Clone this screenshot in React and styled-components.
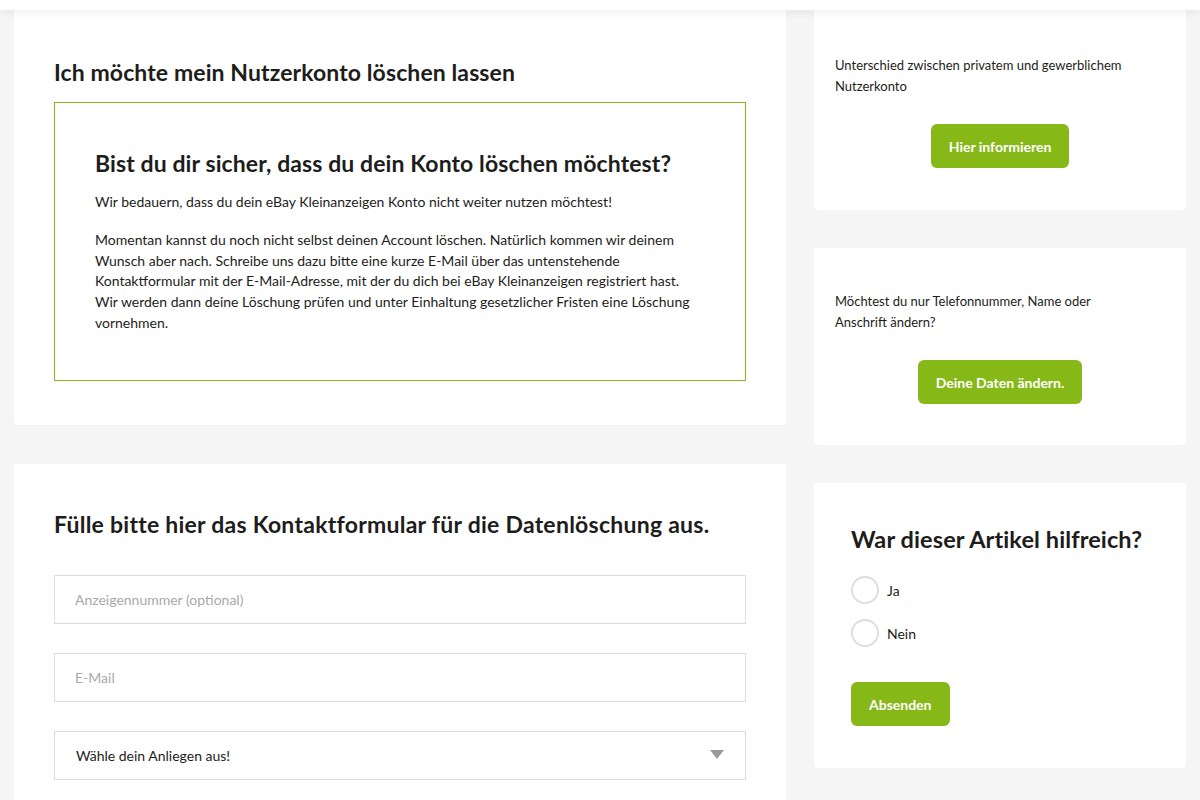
import React from "react";
import styled, { createGlobalStyle } from "styled-components";

const Global = createGlobalStyle`
  html, body { margin: 0; padding: 0; }
  body {
    background: #f5f5f5;
    font-family: Lato, "Open Sans", "Liberation Sans", sans-serif;
    color: #1d1d1b;
    overflow: hidden;
  }
`;

const Header = styled.div`
  position: relative;
  z-index: 2;
  height: 10px;
  background: #fff;
  box-shadow: 0 2px 10px rgba(0, 0, 0, 0.07);
`;

const Layout = styled.div`
  display: grid;
  grid-template-columns: 772px 372px;
  column-gap: 28px;
  padding: 0 14px;
  align-items: start;
`;

const Column = styled.div`
  display: flex;
  flex-direction: column;
  gap: ${(p) => p.$gap || 38}px;
`;

const Card = styled.section`
  background: #fff;
  border-radius: 0 0 4px 4px;
  padding: ${(p) => p.$pad};
  box-sizing: border-box;
  min-height: ${(p) => p.$h || 0}px;
`;

const H2 = styled.h2`
  margin: 0;
  font-size: ${(p) => p.$size || 23}px;
  line-height: 28px;
  font-weight: 700;
  letter-spacing: ${(p) => p.$ls || 0.1}px;
  color: #1d1d1b;
`;

const Notice = styled.div`
  margin-top: 16px;
  border: 1px solid #86b817;
  padding: 46px 40px 46px;
`;

const P = styled.p`
  margin: ${(p) => p.$mt || 0}px 0 0;
  font-size: 14px;
  line-height: 20.75px;
  color: #1d1d1b;
`;

const FormFields = styled.div`
  margin-top: 37px;
  display: flex;
  flex-direction: column;
  gap: 29px;
`;

const Input = styled.input`
  box-sizing: border-box;
  height: 49px;
  width: 100%;
  border: 1px solid #dcdcdc;
  padding: 0 20px;
  font-family: inherit;
  font-size: 14px;
  color: #1d1d1b;
  outline: none;
  &::placeholder { color: #a9a9a9; }
`;

const SelectBox = styled.div`
  box-sizing: border-box;
  height: 49px;
  border: 1px solid #dcdcdc;
  padding: 0 21px;
  display: flex;
  align-items: center;
  justify-content: space-between;
  font-size: 14px;
  color: #1d1d1b;
`;

const Arrow = styled.span`
  width: 0;
  height: 0;
  border-left: 7px solid transparent;
  border-right: 7px solid transparent;
  border-top: 9px solid #9a9a9a;
  margin-top: -2px;
`;

const SideText = styled.p`
  margin: 0;
  max-width: 295px;
  font-size: 13px;
  line-height: 21px;
  color: #1d1d1b;
`;

const Center = styled.div`
  display: flex;
  justify-content: ${(p) => (p.$left ? "flex-start" : "center")};
  margin-top: ${(p) => p.$mt || 0}px;
`;

const Button = styled.button`
  height: 44px;
  padding: 0 18px;
  border: none;
  border-radius: 6px;
  background: #86b817;
  color: #fff;
  font-family: inherit;
  font-weight: 700;
  font-size: 14px;
  cursor: pointer;
`;

const RadioList = styled.div`
  margin-top: 23px;
  display: flex;
  flex-direction: column;
  gap: 15px;
`;

const RadioRow = styled.label`
  display: flex;
  align-items: center;
  gap: 8px;
  font-size: 14px;
  color: #1d1d1b;
`;

const Circle = styled.span`
  width: 24px;
  height: 24px;
  border-radius: 50%;
  border: 2px solid #dedede;
  background: #fff;
`;

export default function App() {
  return (
    <>
      <Global />
      <Header />
      <Layout>
        <Column $gap={39}>
          <Card $pad="48px 40px 44px">
            <H2>Ich möchte mein Nutzerkonto löschen lassen</H2>
            <Notice>
              <H2>Bist du dir sicher, dass du dein Konto löschen möchtest?</H2>
              <P $mt={15}>
                Wir bedauern, dass du dein eBay Kleinanzeigen Konto nicht weiter nutzen möchtest!
              </P>
              <P $mt={17}>
                Momentan kannst du noch nicht selbst deinen Account löschen. Natürlich kommen wir deinem
                <br />
                Wunsch aber nach. Schreibe uns dazu bitte eine kurze E-Mail über das untenstehende
                <br />
                Kontaktformular mit der E-Mail-Adresse, mit der du dich bei eBay Kleinanzeigen registriert hast.
                <br />
                Wir werden dann deine Löschung prüfen und unter Einhaltung gesetzlicher Fristen eine Löschung
                <br />
                vornehmen.
              </P>
            </Notice>
          </Card>
          <Card $pad="46px 40px 40px" $h={400}>
            <H2 $ls={0.25}>Fülle bitte hier das Kontaktformular für die Datenlöschung aus.</H2>
            <FormFields>
              <Input placeholder="Anzeigennummer (optional)" />
              <Input placeholder="E-Mail" />
              <SelectBox>
                <span>Wähle dein Anliegen aus!</span>
                <Arrow />
              </SelectBox>
            </FormFields>
          </Card>
        </Column>
        <Column>
          <Card $pad="45px 21px 42px">
            <SideText>Unterschied zwischen privatem und gewerblichem Nutzerkonto</SideText>
            <Center $mt={27}>
              <Button>Hier informieren</Button>
            </Center>
          </Card>
          <Card $pad="43px 21px 41px">
            <SideText>Möchtest du nur Telefonnummer, Name oder Anschrift ändern?</SideText>
            <Center $mt={27}>
              <Button>Deine Daten ändern.</Button>
            </Center>
          </Card>
          <Card $pad="42px 37px 42px">
            <H2 $size={23.5} $ls={0}>War dieser Artikel hilfreich?</H2>
            <RadioList>
              <RadioRow>
                <Circle />
                Ja
              </RadioRow>
              <RadioRow>
                <Circle />
                Nein
              </RadioRow>
            </RadioList>
            <Center $left $mt={35}>
              <Button>Absenden</Button>
            </Center>
          </Card>
        </Column>
      </Layout>
    </>
  );
}
